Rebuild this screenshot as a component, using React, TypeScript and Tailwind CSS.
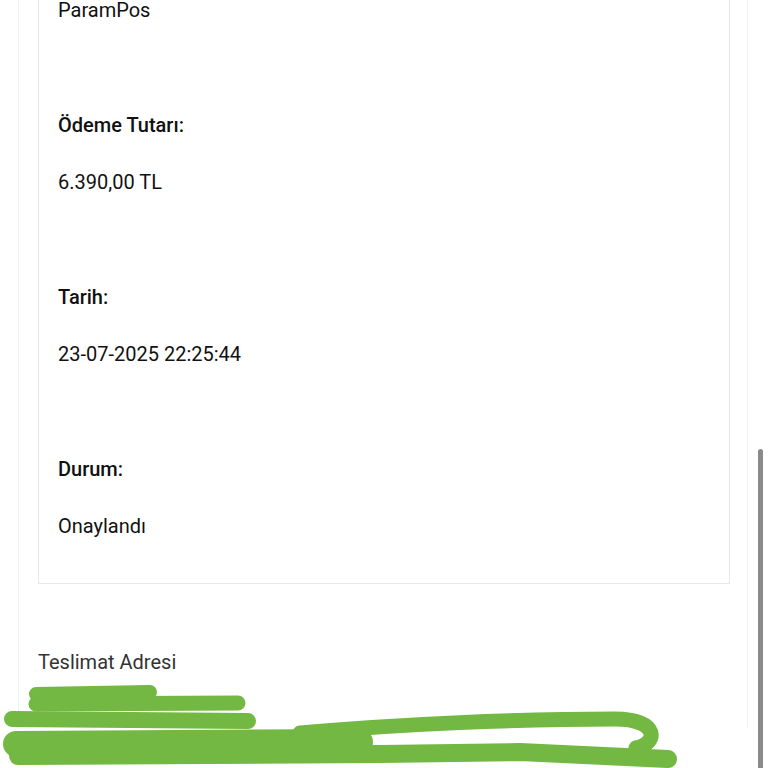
import React from 'react';

const rows = [
    { label: 'Ödeme Tutarı:', value: '6.390,00 TL' },
    { label: 'Tarih:', value: '23-07-2025 22:25:44' },
    { label: 'Durum:', value: 'Onaylandı' },
];

const Scribble: React.FC = () => (
    <svg className="absolute inset-0 pointer-events-none" width="768" height="768" viewBox="0 0 768 768">
        <g fill="none" stroke="#72b843" strokeLinecap="round" strokeLinejoin="round">
            <path d="M36 694 L150 692" strokeWidth="14" />
            <path d="M36 704 L238 703" strokeWidth="15" />
            <path d="M12 719 L248 721" strokeWidth="16" />
            <path d="M16 744 L360 742" strokeWidth="26" />
            <path d="M18 756 L380 754 L520 752 L668 759" strokeWidth="18" />
            <path d="M300 733 C400 724 520 719 615 719 C660 719 658 744 636 748" strokeWidth="15" />
        </g>
    </svg>
);

const App: React.FC = () => {
    return (
        <div className="relative w-full h-screen overflow-hidden bg-white font-['Roboto',sans-serif]">
            <div className="ml-[18px] mr-[20px] h-full border-x border-[#f2f2f2] pl-[19px] pr-[17px]">
                <div className="-mt-[40px] pt-[35px] pb-[43px] px-[19px] border border-[#e8e8e8]">
                    <div className="text-[20px] leading-[28px] text-[#111]">ParamPos</div>
                    {rows.map((r) => (
                        <div key={r.label} className="mt-[87px]">
                            <div className="text-[20px] leading-[28px] text-[#111] font-medium">{r.label}</div>
                            <div className="mt-[29px] text-[20px] leading-[28px] text-[#111]">{r.value}</div>
                        </div>
                    ))}
                </div>
                <div className="mt-[64px] text-[20px] leading-[28px] text-[#333]">Teslimat Adresi</div>
            </div>
            <div className="absolute right-[5px] top-[449px] bottom-[-10px] w-[5px] rounded-full bg-[#8a8a8a]" />
            <Scribble />
        </div>
    );
};

export default App;
